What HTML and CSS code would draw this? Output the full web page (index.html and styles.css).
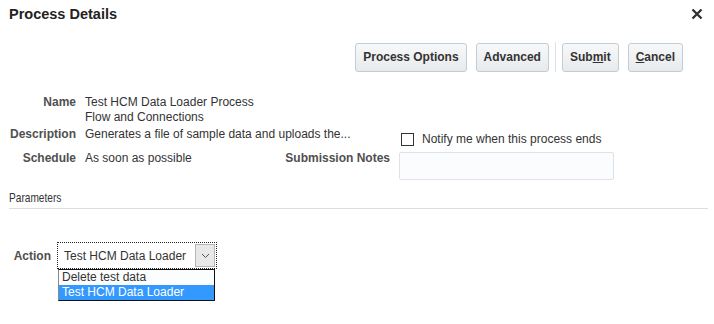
FILE: index.html
```html
<!DOCTYPE html>
<html lang="en">
<head>
    <meta charset="UTF-8">
    <title>Process Details</title>
    <link rel="stylesheet" href="styles.css">
</head>
<body>
<div class="dialog">
    <div class="dialog-header">
        <h2>Process Details</h2>
        <span class="close-btn" title="Close">
            <svg width="12" height="12" viewBox="0 0 12 12">
                <path d="M1.5 1.5 L10.5 10.5 M10.5 1.5 L1.5 10.5" stroke="#333" stroke-width="2.4" fill="none"/>
            </svg>
        </span>
    </div>

    <div class="toolbar">
        <button class="btn">Process Options</button>
        <button class="btn">Advanced</button>
        <span class="toolbar-sep"></span>
        <button class="btn">Sub<u>m</u>it</button>
        <button class="btn"><u>C</u>ancel</button>
    </div>

    <div class="details">
        <div class="lbl">Name</div>
        <div class="val span2">Test HCM Data Loader Process<br>Flow and Connections</div>
        <div class="val"></div>

        <div class="lbl row-desc">Description</div>
        <div class="val span2 row-desc">Generates a file of sample data and uploads the...</div>
        <label class="notify"><span class="checkbox"></span>Notify me when this process ends</label>

        <div class="lbl row-sched">Schedule</div>
        <div class="val row-sched">As soon as possible</div>
        <div class="lbl row-sched">Submission Notes</div>
        <div class="notes-cell"><div class="notes"></div></div>
    </div>

    <div class="section-title"><span>Parameters</span></div>

    <div class="param-row">
        <div class="lbl">Action</div>
        <div class="select-wrap">
            <div class="select">
                <span class="select-text">Test HCM Data Loader</span>
                <span class="select-btn">
                    <svg width="9" height="6" viewBox="0 0 9 6">
                        <path d="M1 1 L4.5 4.5 L8 1" stroke="#555" stroke-width="1" fill="none"/>
                    </svg>
                </span>
            </div>
            <ul class="select-list">
                <li>Delete test data</li>
                <li class="selected">Test HCM Data Loader</li>
            </ul>
        </div>
    </div>
</div>
</body>
</html>
```

FILE: styles.css
```css
body {
    margin: 0;
    font-family: "Liberation Sans", Arial, sans-serif;
    font-size: 12px;
    color: #333;
    background: #fff;
}

.dialog {
    width: 714px;
    height: 324px;
}

.dialog-header {
    display: flex;
    justify-content: space-between;
    align-items: center;
    height: 28px;
    padding: 0 11px 0 9px;
}

.dialog-header h2 {
    margin: 0;
    font-size: 14.5px;
    font-weight: bold;
    color: #222;
}

.close-btn {
    display: flex;
    margin-top: -1px;
}

.toolbar {
    display: flex;
    justify-content: flex-end;
    align-items: center;
    gap: 9px;
    margin-top: 14px;
    padding-right: 31px;
}

.btn {
    height: 29px;
    padding: 0 7px;
    font-family: "Liberation Sans", Arial, sans-serif;
    font-size: 12px;
    font-weight: bold;
    color: #333;
    background: linear-gradient(#f7f8f9, #e7eaec);
    border: 1px solid #c4ccd3;
    border-radius: 3px;
}

.toolbar-sep {
    width: 1px;
    height: 30px;
    background: #dde2e6;
    margin: 0 -3px;
}

.details {
    display: grid;
    grid-template-columns: 76px 190px 106px 230px;
    column-gap: 9px;
    margin-top: 23px;
    line-height: 15px;
}

.lbl {
    text-align: right;
    font-weight: bold;
    color: #4f4f4f;
    white-space: nowrap;
}

.val {
    white-space: nowrap;
}

.span2 {
    grid-column: span 2;
}

.row-desc {
    padding-top: 2px;
}

.row-sched {
    padding-top: 4px;
}

.notify {
    display: flex;
    align-items: center;
    gap: 8px;
    padding: 7px 0 0 2px;
    height: 15px;
    white-space: nowrap;
}

.checkbox {
    width: 11px;
    height: 11px;
    border: 1px solid #333;
    background: #fff;
}

.notes-cell {
    padding-top: 5px;
}

.notes {
    width: 213px;
    height: 26px;
    border: 1px solid #dde3e8;
    border-radius: 2px;
    background: #fbfcfd;
}

.section-title {
    margin: 10px 6px 0 9px;
    padding-bottom: 3px;
    border-bottom: 1px solid #d6dfe6;
}

.section-title span {
    display: inline-block;
    font-size: 13px;
    color: #333;
    transform: scaleX(0.78);
    transform-origin: left;
}

.param-row {
    display: flex;
    align-items: center;
    gap: 6px;
    margin-top: 33px;
}

.param-row .lbl {
    width: 51px;
}

.select-wrap {
    position: relative;
}

.select {
    display: flex;
    align-items: center;
    justify-content: space-between;
    width: 158px;
    height: 25px;
    border: 1px dotted #222;
    background: #fff;
}

.select-text {
    padding-left: 6px;
}

.select-btn {
    display: flex;
    align-items: center;
    justify-content: center;
    width: 18px;
    height: 21px;
    margin-right: 1px;
    border: 1px solid #b5b5b5;
    background: #e8e8e8;
}

.select-list {
    position: absolute;
    left: 1px;
    top: 27px;
    width: 155px;
    margin: 0;
    padding: 0;
    list-style: none;
    border: 1px solid #111;
    border-left-color: #888;
    background: #fcfdfe;
}

.select-list li {
    height: 15px;
    line-height: 15px;
    padding-left: 3px;
}

.select-list li.selected {
    background: #3399ff;
    color: #fff;
}
```
